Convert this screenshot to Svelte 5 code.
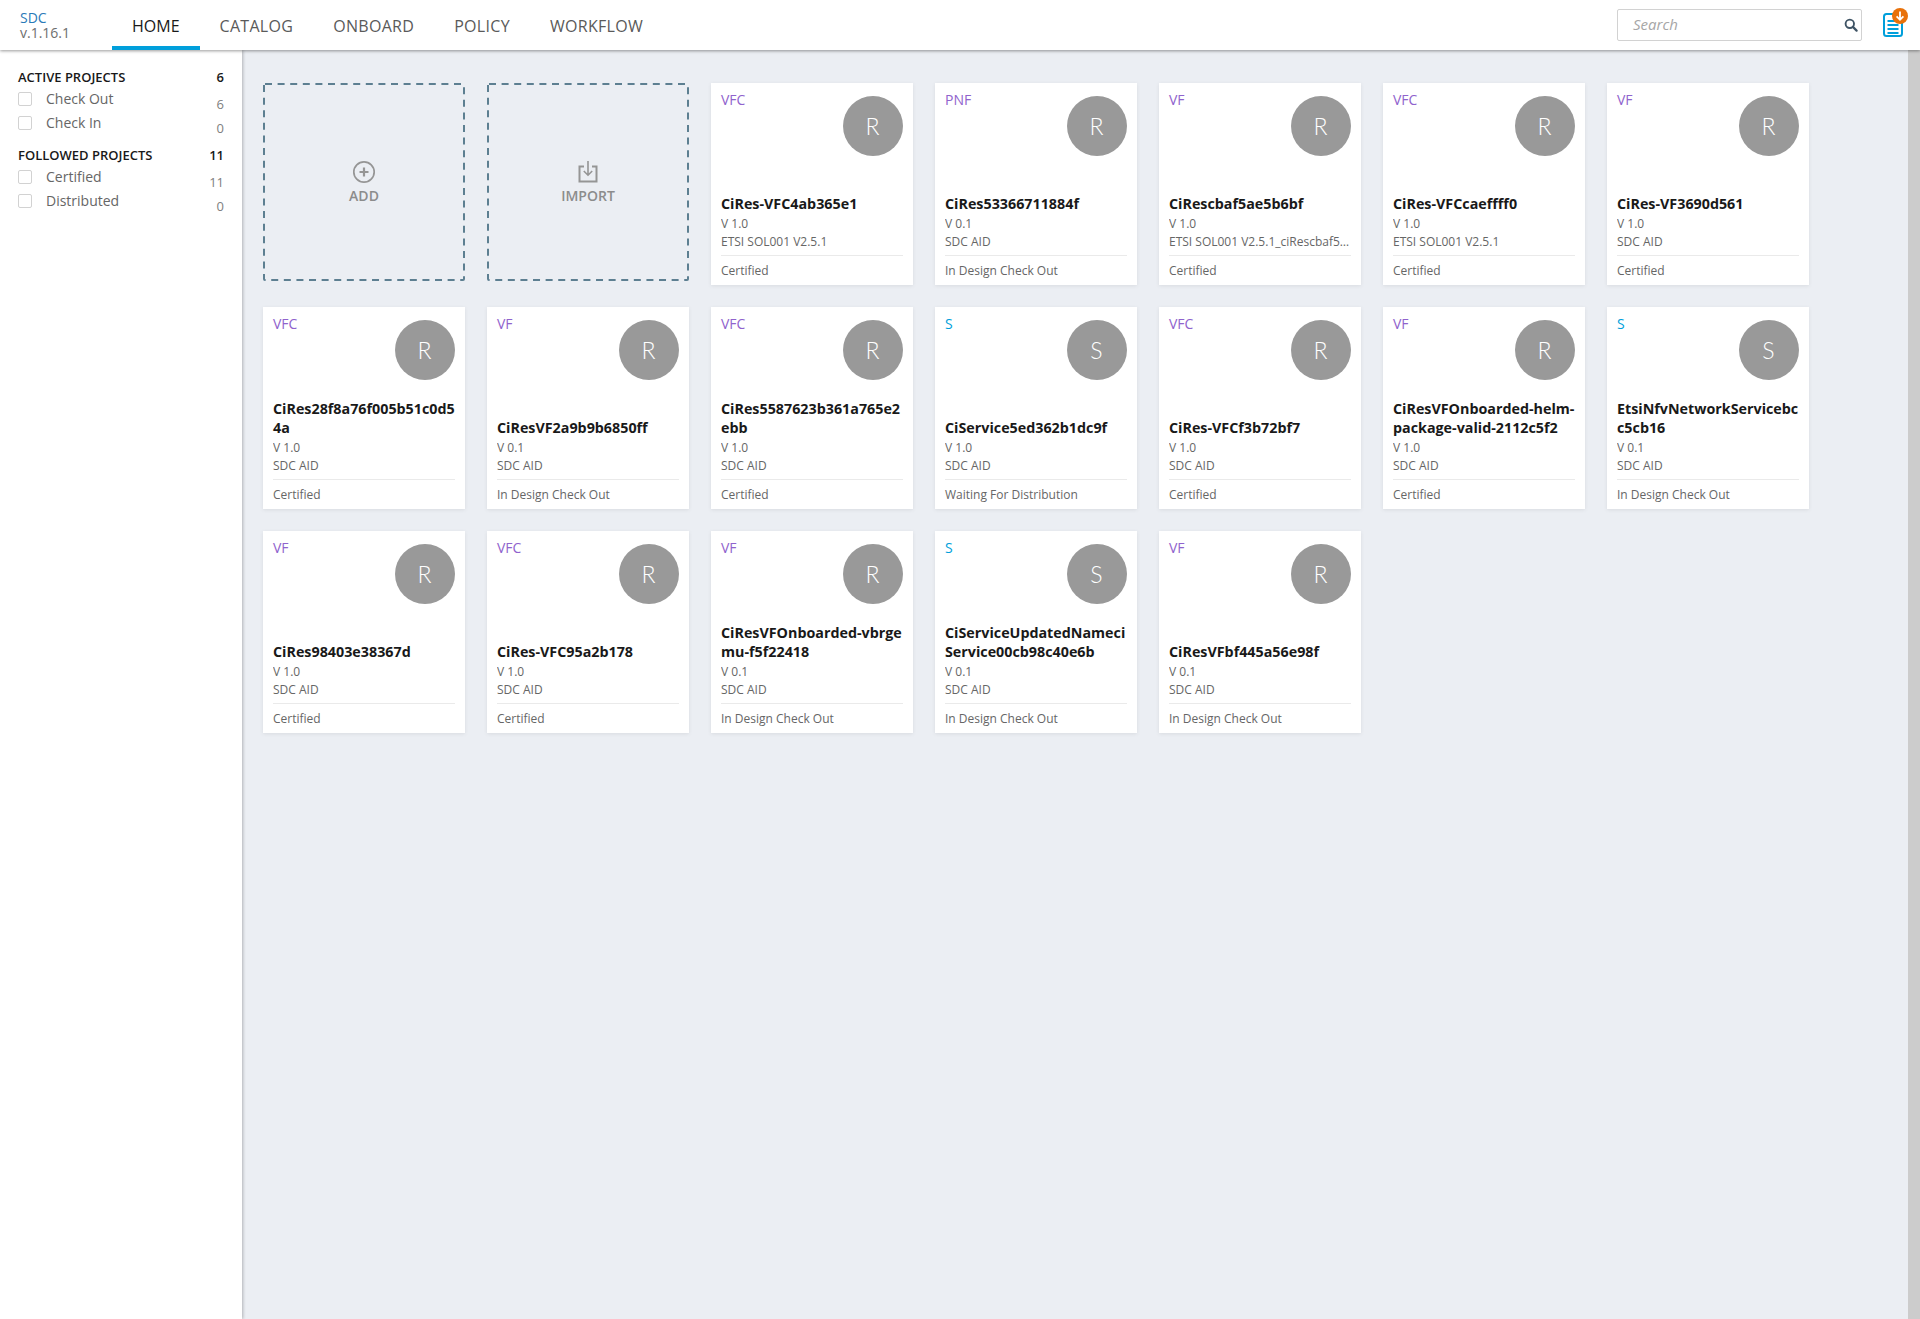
<script lang="ts">
  type Card = { type: string; letter: string; name: string; version: string; vendor: string; status: string };

  const NAV = ["HOME", "CATALOG", "ONBOARD", "POLICY", "WORKFLOW"];

  const FILTERS = [
    { title: "ACTIVE PROJECTS", count: 6, items: [["Check Out", 6], ["Check In", 0]] },
    { title: "FOLLOWED PROJECTS", count: 11, items: [["Certified", 11], ["Distributed", 0]] }
  ];

  const AID = "SDC AID";
  const ETSI = "ETSI SOL001 V2.5.1";
  const CERT = "Certified";
  const DESIGN = "In Design Check Out";

  const cards: Card[] = [
    { type: "VFC", letter: "R", name: "CiRes-VFC4ab365e1", version: "V 1.0", vendor: ETSI, status: CERT },
    { type: "PNF", letter: "R", name: "CiRes53366711884f", version: "V 0.1", vendor: AID, status: DESIGN },
    { type: "VF", letter: "R", name: "CiRescbaf5ae5b6bf", version: "V 1.0", vendor: "ETSI SOL001 V2.5.1_ciRescbaf5ae5b6bf", status: CERT },
    { type: "VFC", letter: "R", name: "CiRes-VFCcaeffff0", version: "V 1.0", vendor: ETSI, status: CERT },
    { type: "VF", letter: "R", name: "CiRes-VF3690d561", version: "V 1.0", vendor: AID, status: CERT },
    { type: "VFC", letter: "R", name: "CiRes28f8a76f005b51c0d54a", version: "V 1.0", vendor: AID, status: CERT },
    { type: "VF", letter: "R", name: "CiResVF2a9b9b6850ff", version: "V 0.1", vendor: AID, status: DESIGN },
    { type: "VFC", letter: "R", name: "CiRes5587623b361a765e2ebb", version: "V 1.0", vendor: AID, status: CERT },
    { type: "S", letter: "S", name: "CiService5ed362b1dc9f", version: "V 1.0", vendor: AID, status: "Waiting For Distribution" },
    { type: "VFC", letter: "R", name: "CiRes-VFCf3b72bf7", version: "V 1.0", vendor: AID, status: CERT },
    { type: "VF", letter: "R", name: "CiResVFOnboarded-helm-package-valid-2112c5f2", version: "V 1.0", vendor: AID, status: CERT },
    { type: "S", letter: "S", name: "EtsiNfvNetworkServicebcc5cb16", version: "V 0.1", vendor: AID, status: DESIGN },
    { type: "VF", letter: "R", name: "CiRes98403e38367d", version: "V 1.0", vendor: AID, status: CERT },
    { type: "VFC", letter: "R", name: "CiRes-VFC95a2b178", version: "V 1.0", vendor: AID, status: CERT },
    { type: "VF", letter: "R", name: "CiResVFOnboarded-vbrgemu-f5f22418", version: "V 0.1", vendor: AID, status: DESIGN },
    { type: "S", letter: "S", name: "CiServiceUpdatedNameciService00cb98c40e6b", version: "V 0.1", vendor: AID, status: DESIGN },
    { type: "VF", letter: "R", name: "CiResVFbf445a56e98f", version: "V 0.1", vendor: AID, status: DESIGN }
  ];
</script>

<div class="page">
  <header class="top">
    <div class="logo">
      <div class="logo__name">SDC</div>
      <div class="logo__version">v.1.16.1</div>
    </div>
    <nav class="nav">
      {#each NAV as item, i}
        <a class="nav__item" class:nav__item--active={i === 0} href="#top">{item}</a>
      {/each}
    </nav>
    <div class="search">
      <span class="search__text">Search</span>
      <svg class="search__icon" viewBox="0 0 14 14" width="14" height="14">
        <circle cx="5.8" cy="5.8" r="4.2" fill="none" stroke="#3f5465" stroke-width="1.9" />
        <path d="M8.9 8.9 L12.6 12.6" stroke="#3f5465" stroke-width="2.2" stroke-linecap="round" />
      </svg>
    </div>
    <div class="notes">
      <svg viewBox="0 0 30 34" width="30" height="34">
        <rect x="2" y="6" width="18" height="22" rx="2.5" fill="#fff" stroke="#009fdb" stroke-width="2" />
        <path d="M5.5 13h11M5.5 17h11M5.5 21h11M5.5 25h11" stroke="#009fdb" stroke-width="2" />
        <circle cx="18" cy="8" r="8" fill="#e8710a" />
        <path d="M18 3.5v8M14.6 8.4 18 11.8l3.4-3.4" fill="none" stroke="#fff" stroke-width="1.8" />
      </svg>
    </div>
  </header>

  <div class="body">
    <aside class="side">
      {#each FILTERS as group}
        <section class="group">
          <div class="group__head">
            <span>{group.title}</span>
            <span>{group.count}</span>
          </div>
          {#each group.items as [label, n]}
            <div class="row">
              <span class="row__box"></span>
              <span class="row__label">{label}</span>
              <span class="row__count">{n}</span>
            </div>
          {/each}
        </section>
      {/each}
    </aside>

    <main class="main">
      <div class="grid">
        <div class="tile">
          <svg class="tile__dash" width="202" height="198">
            <rect x="1" y="1" width="200" height="196" rx="1" fill="none" stroke="#5d7f91" stroke-width="2" stroke-dasharray="7 5.6" />
          </svg>
          <svg viewBox="0 0 24 24" width="24" height="24">
            <circle cx="12" cy="12" r="10.2" fill="none" stroke="#959595" stroke-width="1.7" />
            <path d="M12 7.5v9M7.5 12h9" stroke="#959595" stroke-width="2.2" />
          </svg>
          <span class="tile__text">ADD</span>
        </div>
        <div class="tile">
          <svg class="tile__dash" width="202" height="198">
            <rect x="1" y="1" width="200" height="196" rx="1" fill="none" stroke="#5d7f91" stroke-width="2" stroke-dasharray="7 5.6" />
          </svg>
          <svg viewBox="0 0 24 24" width="24" height="24">
            <path d="M8 6.5H3.5v15h17v-15H16" fill="none" stroke="#959595" stroke-width="2" />
            <path d="M12 1v14M7.8 11l4.2 4.2 4.2-4.2" fill="none" stroke="#959595" stroke-width="1.6" />
          </svg>
          <span class="tile__text">IMPORT</span>
        </div>

        {#each cards as card}
          <article class="card">
            <div class="card__top">
              <span class="card__type" class:card__type--service={card.type === "S"}>{card.type}</span>
              <span class="card__avatar">{card.letter}</span>
            </div>
            <div class="card__name">{card.name}</div>
            <div class="card__meta">{card.version}</div>
            <div class="card__meta">{card.vendor}</div>
            <div class="card__status">{card.status}</div>
          </article>
        {/each}
      </div>
    </main>

    <div class="scroll"></div>
  </div>
</div>

<style>
:global(body) {
  margin: 0;
}
.page {
  display: flex;
  flex-direction: column;
  height: 1319px;
  overflow: hidden;
  font-family: "Open Sans", "Liberation Sans", sans-serif;
  background: #ebeef3;
}

/* header */
.top {
  position: relative;
  z-index: 2;
  display: flex;
  align-items: flex-start;
  flex: 0 0 50px;
  background: #fff;
  box-shadow: 0 1px 3px rgba(0, 0, 0, 0.4);
}
.logo {
  width: 112px;
  padding: 10px 0 0 20px;
  box-sizing: border-box;
  font-size: 14px;
  line-height: 15px;
}
.logo__name {
  color: #2a7ab8;
}
.logo__version {
  color: #6e6e6e;
}
.nav {
  display: flex;
  flex: 1;
  height: 50px;
}
.nav__item {
  box-sizing: border-box;
  height: 50px;
  padding: 15px 20px 0;
  font-size: 16px;
  line-height: 22px;
  letter-spacing: 0.3px;
  color: #5a5a5a;
  text-decoration: none;
}
.nav__item--active {
  letter-spacing: 0;
  color: #191919;
  border-bottom: 4px solid #009fdb;
}
.search {
  box-sizing: border-box;
  display: flex;
  align-items: center;
  justify-content: space-between;
  width: 245px;
  height: 32px;
  margin-top: 9px;
  padding: 0 3px 0 15px;
  border: 1px solid #d2d2d2;
  border-radius: 2px;
}
.search__text {
  margin-top: -2px;
  font-size: 15px;
  font-style: italic;
  color: #a6a6a6;
}
.notes {
  margin: 8px 8px 0 20px;
  height: 34px;
}

/* layout */
.body {
  display: flex;
  flex: 1;
  min-height: 0;
}
.side {
  position: relative;
  z-index: 1;
  box-sizing: border-box;
  flex: 0 0 242px;
  padding: 18px 18px 0 18px;
  background: #fff;
  box-shadow: 1px 0 3px rgba(0, 0, 0, 0.25);
}
.group {
  margin-bottom: 11px;
}
.group__head {
  display: flex;
  justify-content: space-between;
  height: 19px;
  font-size: 13px;
  font-weight: 600;
  line-height: 18px;
  color: #191919;
}
.row {
  display: flex;
  align-items: flex-start;
  height: 24px;
  font-size: 14px;
  line-height: 20px;
  color: #666;
}
.row__box {
  box-sizing: border-box;
  flex: 0 0 14px;
  height: 14px;
  margin-top: 5px;
  border: 1px solid #d2d2d2;
  border-radius: 2px;
}
.row__label {
  flex: 1;
  margin: 2px 0 0 14px;
}
.row__count {
  margin-top: 7px;
  font-size: 13px;
  color: #808080;
}
.main {
  flex: 1;
  padding: 33px 0 0 21px;
  min-width: 0;
}
.scroll {
  flex: 0 0 12px;
  background: #ccc;
}
.grid {
  display: grid;
  grid-template-columns: repeat(7, 202px);
  grid-auto-rows: 202px;
  gap: 22px;
}

/* add / import tiles */
.tile {
  position: relative;
  display: flex;
  flex-direction: column;
  align-items: center;
  height: 198px;
  padding-top: 77px;
  box-sizing: border-box;
}
.tile__dash {
  position: absolute;
  top: 0;
  left: 0;
}
.tile__text {
  margin-top: 2px;
  font-size: 14px;
  font-weight: 600;
  line-height: 20px;
  color: #8c8c8c;
}

/* cards */
.card {
  display: flex;
  flex-direction: column;
  box-sizing: border-box;
  height: 202px;
  padding: 13px 10px 0;
  background: #fff;
  box-shadow: 0 1px 4px rgba(0, 0, 0, 0.08);
}
.card__top {
  display: flex;
  justify-content: space-between;
  align-items: flex-start;
  margin-bottom: auto;
}
.card__type {
  margin-top: -1px;
  font-size: 14px;
  line-height: 10px;
  color: #9063cd;
}
.card__type--service {
  color: #009fdb;
}
.card__avatar {
  display: flex;
  align-items: center;
  justify-content: center;
  box-sizing: border-box;
  width: 60px;
  height: 60px;
  padding: 0 1px 1px 0;
  border-radius: 50%;
  background: #999;
  color: #fff;
  font-family: Lato, "Open Sans", sans-serif;
  font-size: 23px;
  font-weight: 300;
}
.card__name {
  margin-bottom: 2px;
  font-size: 14.3px;
  font-weight: 700;
  line-height: 19px;
  color: #191919;
  word-break: break-all;
}
.card__meta {
  margin-top: -1px;
  font-size: 12px;
  line-height: 19px;
  color: #666;
  white-space: nowrap;
  overflow: hidden;
  text-overflow: ellipsis;
}
.card__status {
  box-sizing: border-box;
  height: 30px;
  margin-top: 4px;
  border-top: 1px solid #eaeaea;
  font-size: 12px;
  line-height: 30px;
  color: #666;
}
</style>
